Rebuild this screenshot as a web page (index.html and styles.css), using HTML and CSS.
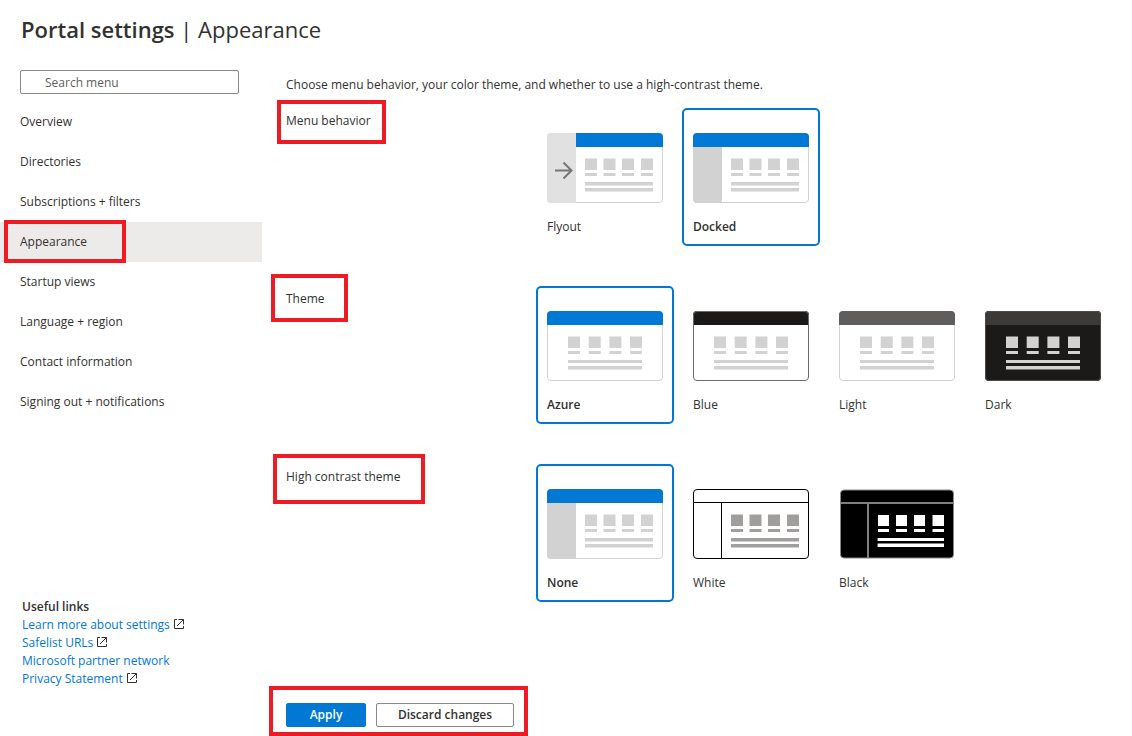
FILE: index.html
```html
<!DOCTYPE html>
<html lang="en">
<head>
<meta charset="utf-8">
<meta name="viewport" content="width=device-width, initial-scale=1">
<title>Portal settings | Appearance</title>
<link rel="stylesheet" href="styles.css">
</head>
<body>
<svg class="defs" aria-hidden="true">
  <symbol id="tiles-narrow" viewBox="0 0 116 70">
    <path fill="currentColor" d="M38 25.6h12V37H38zM56.5 25.6h12V37h-12zM75 25.6h12V37H75zM94 25.6h12V37H94zM38 40h12v3H38zM56.5 40h12v3h-12zM75 40h12v3H75zM94 40h12v3H94zM38 49h68v3.5H38zM38 55h68v3.5H38z"/>
  </symbol>
  <symbol id="tiles-wide" viewBox="0 0 116 70">
    <path fill="currentColor" d="M21 25.6h12V37H21zM41.7 25.6h12V37h-12zM62.4 25.6h12V37h-12zM83 25.6h12V37H83zM21 40h12v3H21zM41.7 40h12v3h-12zM62.4 40h12v3h-12zM83 40h12v3H83zM21 49h74v3H21zM21 55h74v3.4H21z"/>
  </symbol>
  <symbol id="frame" viewBox="0 0 116 70">
    <rect x=".5" y=".5" width="115" height="69" rx="3.5" fill="none" stroke="currentColor"/>
  </symbol>
  <symbol id="bar" viewBox="0 0 116 70">
    <path fill="currentColor" d="M0 14V4a4 4 0 0 1 4-4h108a4 4 0 0 1 4 4v10z"/>
  </symbol>
  <symbol id="rail" viewBox="0 0 116 70">
    <path fill="currentColor" d="M0 14h29v56H4a4 4 0 0 1-4-4z"/>
  </symbol>
  <symbol id="external" viewBox="0 0 12 12">
    <path fill="none" stroke="currentColor" d="M4 1.5H1.5v9h9V8M5.5 1.5h5v5M10.5 1.5L4 8"/>
  </symbol>
</svg>

<div class="page">
  <header class="page-header">
    <h1 class="title"><strong class="title-name">Portal settings</strong> | Appearance</h1>
  </header>

  <aside class="sidebar">
    <input class="search" type="search" placeholder="Search menu" aria-label="Search menu">
    <nav class="menu" aria-label="Settings">
      <a class="menu-item" href="#overview">Overview</a>
      <a class="menu-item" href="#directories">Directories</a>
      <a class="menu-item" href="#subscriptions">Subscriptions + filters</a>
      <a class="menu-item menu-item-current" href="#appearance" aria-current="page">Appearance<span class="mark mark-menu"></span></a>
      <a class="menu-item" href="#startup">Startup views</a>
      <a class="menu-item" href="#language">Language + region</a>
      <a class="menu-item" href="#contact">Contact information</a>
      <a class="menu-item" href="#signing-out">Signing out + notifications</a>
    </nav>
    <section class="links">
      <h2 class="links-title">Useful links</h2>
      <a class="link" href="#learn">Learn more about settings <svg class="external"><use href="#external"/></svg></a>
      <a class="link" href="#safelist">Safelist URLs <svg class="external"><use href="#external"/></svg></a>
      <a class="link" href="#partner">Microsoft partner network</a>
      <a class="link" href="#privacy">Privacy Statement <svg class="external"><use href="#external"/></svg></a>
    </section>
  </aside>

  <main class="main">
    <p class="intro">Choose menu behavior, your color theme, and whether to use a high-contrast theme.</p>

    <div class="setting" role="radiogroup" aria-labelledby="menu-label">
      <h2 class="setting-name" id="menu-label">Menu behavior<span class="mark mark-behavior"></span></h2>
      <div class="cards">
        <label class="card">
          <input class="card-input" type="radio" name="behavior">
          <svg class="thumb" viewBox="0 0 116 70">
            <use href="#frame" color="#d2d2d2"/>
            <path fill="#0078d4" d="M29 0h83a4 4 0 0 1 4 4v10H29z"/>
            <path fill="#e1e1e1" d="M29 0v70H4a4 4 0 0 1-4-4V4a4 4 0 0 1 4-4z"/>
            <path fill="none" stroke="#767676" stroke-width="2" d="M8 37.5h16M16.5 29.5l8 8-8 8"/>
            <use href="#tiles-narrow" color="#d2d2d2"/>
          </svg>
          <span class="card-name">Flyout</span>
        </label>
        <label class="card">
          <input class="card-input" type="radio" name="behavior" checked>
          <svg class="thumb" viewBox="0 0 116 70">
            <use href="#frame" color="#d2d2d2"/>
            <use href="#bar" color="#0078d4"/>
            <use href="#rail" color="#d2d2d2"/>
            <use href="#tiles-narrow" color="#d2d2d2"/>
          </svg>
          <span class="card-name">Docked</span>
        </label>
      </div>
    </div>

    <div class="setting" role="radiogroup" aria-labelledby="theme-label">
      <h2 class="setting-name" id="theme-label">Theme<span class="mark mark-theme"></span></h2>
      <div class="cards">
        <label class="card">
          <input class="card-input" type="radio" name="theme" checked>
          <svg class="thumb" viewBox="0 0 116 70">
            <use href="#frame" color="#d2d2d2"/>
            <use href="#bar" color="#0078d4"/>
            <use href="#tiles-wide" color="#d2d2d2"/>
          </svg>
          <span class="card-name">Azure</span>
        </label>
        <label class="card">
          <input class="card-input" type="radio" name="theme">
          <svg class="thumb" viewBox="0 0 116 70">
            <use href="#bar" color="#1b1a19"/>
            <use href="#frame" color="#6b6a69"/>
            <use href="#tiles-wide" color="#d2d2d2"/>
          </svg>
          <span class="card-name">Blue</span>
        </label>
        <label class="card">
          <input class="card-input" type="radio" name="theme">
          <svg class="thumb" viewBox="0 0 116 70">
            <use href="#frame" color="#d2d2d2"/>
            <use href="#bar" color="#5f5e5c"/>
            <use href="#tiles-wide" color="#d2d2d2"/>
          </svg>
          <span class="card-name">Light</span>
        </label>
        <label class="card">
          <input class="card-input" type="radio" name="theme">
          <svg class="thumb" viewBox="0 0 116 70">
            <rect width="116" height="70" rx="4" fill="#1b1a19"/>
            <use href="#bar" color="#3b3a39"/>
            <use href="#frame" color="#4b4a49"/>
            <use href="#tiles-wide" color="#d2d2d2"/>
          </svg>
          <span class="card-name">Dark</span>
        </label>
      </div>
    </div>

    <div class="setting" role="radiogroup" aria-labelledby="contrast-label">
      <h2 class="setting-name" id="contrast-label">High contrast theme<span class="mark mark-contrast"></span></h2>
      <div class="cards">
        <label class="card">
          <input class="card-input" type="radio" name="contrast" checked>
          <svg class="thumb" viewBox="0 0 116 70">
            <use href="#frame" color="#d2d2d2"/>
            <use href="#bar" color="#0078d4"/>
            <use href="#rail" color="#d2d2d2"/>
            <use href="#tiles-narrow" color="#d2d2d2"/>
          </svg>
          <span class="card-name">None</span>
        </label>
        <label class="card">
          <input class="card-input" type="radio" name="contrast">
          <svg class="thumb" viewBox="0 0 116 70">
            <use href="#frame" color="#000"/>
            <path fill="none" stroke="#000" d="M0 13.5h116M28.5 13.5V70"/>
            <use href="#tiles-narrow" color="#a19f9d"/>
          </svg>
          <span class="card-name">White</span>
        </label>
        <label class="card">
          <input class="card-input" type="radio" name="contrast">
          <svg class="thumb" viewBox="0 0 116 70">
            <rect x="1.5" y="1" width="113" height="68" rx="3.5" fill="#000" stroke="#8a8886"/>
            <path fill="none" stroke="#808080" stroke-width="2" d="M2 14h112M29 14v55"/>
            <path fill="#fff" d="M39 26h11v11H39zM57 26h11v11H57zM75 26h11v11H75zM93.5 26h11.5v11H93.5zM39 40h11v3H39zM57 40h11v3H57zM75 40h11v3H75zM93.5 40h11.5v3H93.5zM38.6 49h66.4v3H38.6zM38.6 54.5h66.4V58H38.6z"/>
          </svg>
          <span class="card-name">Black</span>
        </label>
      </div>
    </div>

    <div class="actions">
      <button class="button button-primary" type="button">Apply</button>
      <button class="button" type="button">Discard changes</button>
      <span class="mark mark-actions"></span>
    </div>
  </main>
</div>
</body>
</html>
```
FILE: styles.css
```css
* {
  box-sizing: border-box;
}

body {
  margin: 0;
  background: #fff;
  color: #323130;
  font-family: "Segoe UI", "Open Sans", "Noto Sans", sans-serif;
  font-size: 12px;
  line-height: 18px;
}

.defs {
  position: absolute;
  width: 0;
  height: 0;
}

.page {
  display: grid;
  grid-template-columns: 262px minmax(0, 1fr);
  grid-template-rows: auto 1fr;
  min-height: 100vh;
}

.page-header {
  grid-column: 1 / -1;
  padding: 12px 21px 10px;
}

.title {
  margin: 0;
  font-size: 22px;
  font-weight: 400;
  line-height: 34px;
}

.title-name {
  font-weight: 600;
}

/* Sidebar */

.sidebar {
  display: flex;
  flex-direction: column;
  padding: 14px 0 48px;
}

.search {
  height: 24px;
  margin: 0 23px 8px 20px;
  padding: 0 24px;
  border: 1px solid #8a8886;
  border-radius: 2px;
  background: #fff;
  color: #323130;
  font: inherit;
  appearance: none;
}

.search::placeholder {
  color: #605e5c;
}

.menu {
  display: flex;
  flex-direction: column;
}

.menu-item {
  position: relative;
  padding: 11px 20px;
  color: inherit;
  text-decoration: none;
}

.menu-item-current {
  background: #edebe9;
}

.links {
  display: flex;
  flex-direction: column;
  align-items: flex-start;
  margin-top: auto;
  padding: 0 22px;
}

.links-title {
  margin: 0;
  font-size: 12px;
  font-weight: 600;
}

.link {
  color: #0078d4;
  text-decoration: none;
}

.external {
  width: 12px;
  height: 12px;
  color: #323130;
  vertical-align: -1px;
}

/* Settings */

.main {
  display: flex;
  flex-direction: column;
  padding: 20px 16px 9px 24px;
}

.intro {
  margin: 0 0 14px;
}

.setting {
  display: grid;
  grid-template-columns: 250px minmax(0, 1fr);
  margin-bottom: 40px;
}

.setting-name {
  position: relative;
  justify-self: start;
  align-self: start;
  margin: 4px 0 0;
  font-size: 12px;
  font-weight: 400;
}

.cards {
  display: flex;
  flex-wrap: wrap;
  gap: 8px;
}

.card {
  position: relative;
  display: flex;
  flex-direction: column;
  gap: 15px;
  padding: 23px 9px 8px;
  border: 2px solid transparent;
  border-radius: 5px;
  cursor: pointer;
}

.card:has(.card-input:checked) {
  border-color: #0078d4;
  font-weight: 600;
}

.card-input {
  position: absolute;
  margin: 0;
  opacity: 0;
}

.thumb {
  width: 116px;
  height: 70px;
}

.actions {
  position: relative;
  display: flex;
  gap: 10px;
  align-self: flex-start;
  margin-top: auto;
}

.button {
  height: 24px;
  min-width: 138px;
  padding: 0 20px;
  border: 1px solid #8a8886;
  border-radius: 2px;
  background: #fff;
  color: #323130;
  font: inherit;
  font-weight: 600;
}

.button-primary {
  min-width: 80px;
  border-color: #0078d4;
  background: #0078d4;
  color: #fff;
}

/* Red callout frames laid over the content */

.mark {
  position: absolute;
  border: 4px solid #ed1c24;
  pointer-events: none;
}

.mark-menu {
  inset: -2px 136px -1px 4px;
}

.mark-behavior {
  inset: -12px -15px -14px -9px;
}

.mark-theme {
  inset: -16px -23px -14px -15px;
}

.mark-contrast {
  inset: -14px -25px -18px -13px;
}

.mark-actions {
  inset: -17px -14px -9px -17px;
}
```
